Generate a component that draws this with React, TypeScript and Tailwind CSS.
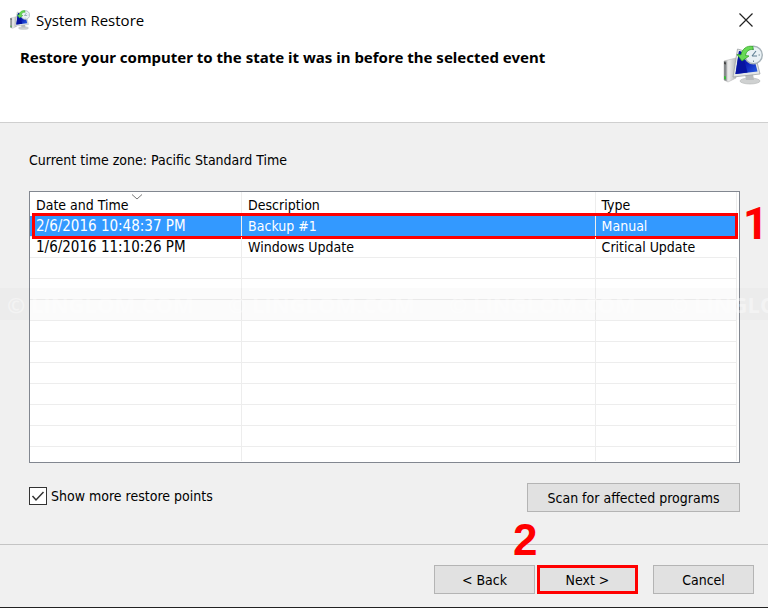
import { useState } from 'react'
import clsx from 'clsx'

const restorePoints = [
  { date: '2/6/2016 10:48:37 PM', description: 'Backup #1', type: 'Manual' },
  { date: '1/6/2016 11:10:26 PM', description: 'Windows Update', type: 'Critical Update' },
]

const emptyRows = [0, 1, 2, 3, 4, 5, 6, 7, 8]

const buttonClass = 'h-[29px] border border-[#b4b4b4] bg-[#e1e1e1] text-center text-black hover:bg-[#e5f1fb]'

function RestoreIcon({ className }: { className: string }) {
  return (
    <svg viewBox="0 0 40 40" className={className} aria-hidden="true">
      <defs>
        <linearGradient id="tower" x1="0" x2="1">
          <stop offset="0" stopColor="#a5a8aa" />
          <stop offset=".4" stopColor="#ececec" />
          <stop offset="1" stopColor="#b4b7b9" />
        </linearGradient>
        <linearGradient id="screen" x1="0" y1="0" x2="1" y2="1">
          <stop offset="0" stopColor="#1a3fc8" />
          <stop offset=".5" stopColor="#0a1ab4" />
          <stop offset="1" stopColor="#2a62e4" />
        </linearGradient>
      </defs>
      <path d="M1 16l12-3v20l-8 4-4-2z" fill="url(#tower)" stroke="#b8b8b8" strokeWidth=".6" />
      <path d="M1 16l2.500.5v19.500L1 35z" fill="#85898b" />
      <path d="M1 17l2 .5v2L1 19z" fill="#444" />
      <path d="M1 31l2 .6v3L1 34z" fill="#38b838" />
      <ellipse cx="27" cy="36" rx="10" ry="3" fill="#cfd1d1" stroke="#b0b3b4" strokeWidth=".6" />
      <path d="M22 29h8l1 6h-8z" fill="#b9bcbd" />
      <path d="M14.500 4L32 9l5 20-27 3z" fill="#e3e6e6" stroke="#a0a4a6" strokeWidth=".8" />
      <path d="M16 6l14.500 5 4 15.500-22 2.500z" fill="url(#screen)" />
      <path d="M16 6l3 1 5.500 20.500-12 1.500z" fill="#0714a0" />
      <circle cx="30.500" cy="10" r="8.800" fill="#e9f1f5" stroke="#a6b2b9" strokeWidth="1.400" />
      <path d="M30.500 3.500v1.500M30.500 15.500v1.500M35.500 10h1.500" stroke="#78909c" strokeWidth="1" />
      <path d="M29 11l4-5M29 11h5" stroke="#5d7d92" strokeWidth="1.100" fill="none" />
      <path
        d="M30 1.500c-6-1.500-11 2.500-12 8.500l-4-.5 5 6.500 7-5-3.500-.5c.5-4 3.500-6.500 7.500-6z"
        fill="#68da55"
        stroke="#36a52b"
        strokeWidth=".8"
      />
    </svg>
  )
}

function Watermark() {
  return (
    <div
      aria-hidden="true"
      className="pointer-events-none absolute inset-x-0 top-[96px] -mx-[30px] flex h-8 items-center overflow-hidden bg-black/[0.015] pl-[7px] font-['Open_Sans',sans-serif] text-[22px] font-bold whitespace-nowrap text-white/40"
    >
      {[0, 1, 2, 3].map((n) => (
        <span key={n} className="w-[221px] shrink-0">
          © LINGLOM.COM
        </span>
      ))}
    </div>
  )
}

function RestoreTable() {
  const [selected, setSelected] = useState(0)

  return (
    <div className="relative mt-[21px] h-[272px] border border-[#828790] bg-white pr-[2px]">
      <table className="w-full table-fixed border-separate border-spacing-0 text-left leading-5">
        <thead>
          <tr className="h-6">
            <th className="relative w-[30%] border-r border-[#ededed] p-0 pt-px pl-[6px] font-normal">
              Date and Time
              <svg viewBox="0 0 12 6" className="absolute top-[2px] left-[101px] h-[6px] w-3" aria-hidden="true">
                <path d="M1 .5l5 4.500 5-4.500" fill="none" stroke="#777" />
              </svg>
            </th>
            <th className="w-[50%] border-r border-[#ededed] p-0 pt-px pl-[6px] font-normal">Description</th>
            <th className="w-[20%] border-r border-[#ededed] p-0 pt-px pl-[6px] font-normal">Type</th>
          </tr>
        </thead>
        <tbody>
          {restorePoints.map((point, i) => (
            <tr
              key={point.date}
              onClick={() => setSelected(i)}
              className={clsx('relative h-[21px]', i === selected && 'bg-[#3399ff] text-white')}
            >
              <td className="border-r border-b border-[#ededed] p-0 pl-[6px] text-[15px] leading-5">
                {point.date}
                {i === 0 && (
                  <span className="absolute -top-[3px] -right-px -bottom-[2px] left-[2px] border-3 border-[#ff0000]" />
                )}
              </td>
              <td className="border-r border-b border-[#ededed] p-0 pl-[6px]">{point.description}</td>
              <td className="border-b border-[#ededed] p-0 pl-[6px]">{point.type}</td>
            </tr>
          ))}
          {emptyRows.map((n) => (
            <tr key={n} className="h-[21px]">
              <td className="border-r border-b border-[#ededed] p-0" />
              <td className="border-r border-b border-[#ededed] p-0" />
              <td className="border-r border-b border-[#ededed] p-0" />
            </tr>
          ))}
          <tr className="h-[14px]">
            <td className="border-r border-[#ededed] p-0" />
            <td className="border-r border-[#ededed] p-0" />
            <td className="border-r border-[#ededed] p-0" />
          </tr>
        </tbody>
      </table>
      <Watermark />
      <span className="absolute top-[10px] left-full ml-1 font-['Roboto',sans-serif] text-[44px] leading-[44px] font-bold text-[#ff0000]">
        1
      </span>
    </div>
  )
}

export default function App() {
  const [showMore, setShowMore] = useState(true)

  return (
    <div className="flex min-h-screen flex-col overflow-hidden border-b border-[#222] bg-[#f0f0f0] font-['DejaVu_Sans_Condensed','DejaVu_Sans',sans-serif] text-[14px] leading-5 text-black">
      <header className="h-[123px] border-b border-[#cfcfcf] bg-white">
        <div className="flex h-10 items-center pr-[14px] pl-[10px]">
          <RestoreIcon className="h-5 w-5" />
          <h1 className="ml-[6px] font-['Open_Sans',sans-serif] text-[15px]">System Restore</h1>
          <button type="button" aria-label="Close" className="ml-auto">
            <svg viewBox="0 0 16 16" className="h-4 w-4">
              <path d="M1.500 1.500l13 13M14.500 1.500l-13 13" stroke="#222" strokeWidth="1.200" />
            </svg>
          </button>
        </div>
        <div className="flex items-start justify-between pr-[5px] pl-5">
          <h2 className="mt-[7px] font-['Noto_Sans',sans-serif] text-[15px] font-bold">
            Restore your computer to the state it was in before the selected event
          </h2>
          <RestoreIcon className="mt-[5px] h-10 w-10" />
        </div>
      </header>

      <main className="flex-1 pt-[27px] pr-[28px] pl-[29px]">
        <p>Current time zone: Pacific Standard Time</p>
        <RestoreTable />
        <div className="mt-5 flex items-start justify-between">
          <label className="mt-[3px] flex items-center gap-1">
            <span className="relative flex">
              <input
                type="checkbox"
                checked={showMore}
                onChange={(e) => setShowMore(e.target.checked)}
                className="peer h-[18px] w-[18px] appearance-none border border-[#333] bg-white"
              />
              <svg
                viewBox="0 0 18 18"
                className="pointer-events-none absolute inset-0 hidden peer-checked:block"
                aria-hidden="true"
              >
                <path d="M3.500 9l3.500 4 7.500-8" fill="none" stroke="#333" strokeWidth="1.500" />
              </svg>
            </span>
            Show more restore points
          </label>
          <button type="button" className={clsx(buttonClass, 'w-[213px]')}>
            Scan for affected programs
          </button>
        </div>
      </main>

      <footer className="flex h-[63px] justify-end border-t border-[#c4c4c4] pt-5 pr-[14px]">
        <button type="button" className={clsx(buttonClass, 'w-[101px]')}>
          &lt; Back
        </button>
        <div className="relative ml-[2px]">
          <button type="button" className={clsx(buttonClass, 'w-[101px] outline-3 -outline-offset-3 outline-[#ff0000]')}>
            Next &gt;
          </button>
          <span className="absolute -top-[47px] -left-6 font-['Liberation_Sans',sans-serif] text-[44px] leading-[44px] font-bold text-[#ff0000]">
            2
          </span>
        </div>
        <button type="button" className={clsx(buttonClass, 'ml-[15px] w-[101px]')}>
          Cancel
        </button>
      </footer>
    </div>
  )
}
